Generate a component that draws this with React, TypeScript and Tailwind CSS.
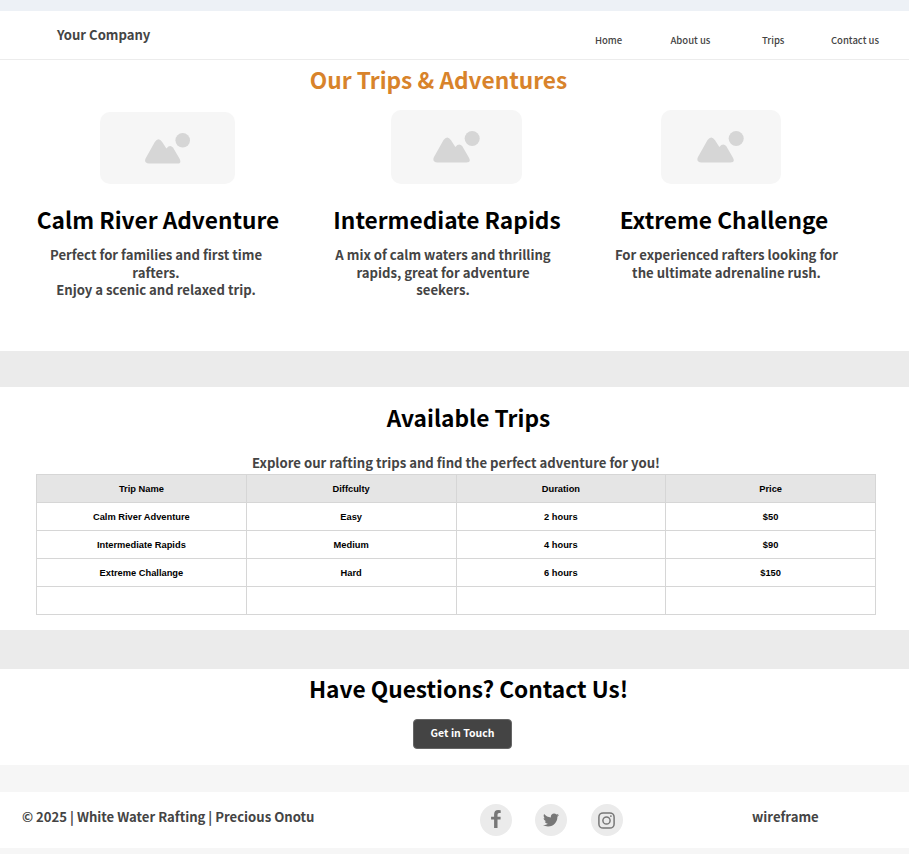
import { FaTwitter } from "react-icons/fa";

const trips = [
  ["Calm River Adventure", "Easy", "2 hours", "$50"],
  ["Intermediate Rapids", "Medium", "4 hours", "$90"],
  ["Extreme Challange", "Hard", "6 hours", "$150"],
  ["", "", "", ""],
];

function Placeholder({ className, icon }: { className: string; icon: string }) {
  return (
    <div className={`flex rounded-[10px] bg-[#f6f6f6] ${className}`}>
      <svg viewBox="0 0 45 31" className={icon} fill="#d6d6d6">
        <circle cx="37.7" cy="7.3" r="7.3" />
        <path d="M.7 25.2 9.8 9Q13.5 3.6 17.2 9L21.4 15.4Q25 11 28 14.6L34.6 25.8Q37 30.6 32 30.6H4Q-1.5 30 .7 25.2Z" />
      </svg>
    </div>
  );
}

function FacebookIcon() {
  return (
    <svg viewBox="0 0 10 18" className="mb-0.5 h-[18px] w-[10px]" fill="currentColor">
      <path d="M9.7.2V3.1H8.1Q6.5 3.1 6.5 4.7V6.7H9.6V9.5H6.5V17.9H3.1V9.5H.1V6.7H3.1V4.3Q3.1 0 7.3 0Q8.9 0 9.7.2Z" />
    </svg>
  );
}

function InstagramIcon() {
  return (
    <svg viewBox="0 0 17 17" className="size-[17px]" fill="none" stroke="currentColor" strokeWidth="1.5">
      <rect x=".9" y=".9" width="15.2" height="15.2" rx="4.2" />
      <circle cx="8.5" cy="8.5" r="3.6" />
      <circle cx="12.9" cy="4.1" r=".9" fill="currentColor" stroke="none" />
    </svg>
  );
}

export default function App() {
  return (
    <div className="h-[861px] w-[909px] overflow-hidden bg-white font-['Noto_Sans_CJK_SC',sans-serif] font-bold whitespace-nowrap text-[#444]">
      <div className="h-[11px] bg-[#edf1f6]" />
      <header className="flex h-[49px] justify-between border-b border-[#ececec] pl-[57px] pr-[29px]">
        <div className="pt-[14px] text-[13.1px] leading-5">Your Company</div>
        <nav className="flex pt-[19px] text-[9.5px] leading-5 font-medium">
          <a className="w-[75.5px]">Home</a>
          <a className="w-[91.5px]">About us</a>
          <a className="w-[69px]">Trips</a>
          <a className="mr-px">Contact us</a>
        </nav>
      </header>

      <section className="h-[291px]">
        <h1 className="w-[877px] pt-1 text-center text-[22.7px] leading-8 text-[#d8832b]">Our Trips &amp; Adventures</h1>
        <div className="flex pt-[14px]">
          <article className="flex w-[316px] flex-col items-center">
            <Placeholder className="ml-[19px] mt-0.5 h-[72px] w-[135px]" icon="ml-[45px] mt-[21px] h-[31px] w-[45px]" />
            <h2 className="pt-5 text-[22.7px] leading-8 text-black">Calm River Adventure</h2>
            <p className="mr-1 pt-[10px] text-center text-[13.15px] leading-[17.5px]">Perfect for families and first time<br />rafters.<br />Enjoy a scenic and relaxed trip.</p>
          </article>
          <article className="flex w-[262px] flex-col items-center">
            <Placeholder className="ml-[19px] h-[74px] w-[131px]" icon="ml-[42px] mt-[21px] h-[32px] w-[47px]" />
            <h2 className="pt-5 text-[22.7px] leading-8 text-black">Intermediate Rapids</h2>
            <p className="mr-2 pt-[10px] text-center text-[13.15px] leading-[17.5px]">A mix of calm waters and thrilling<br />rapids, great for adventure<br />seekers.</p>
          </article>
          <article className="flex w-[292px] flex-col items-center">
            <Placeholder className="mr-[7px] h-[74px] w-[120px]" icon="ml-[36px] mt-[21px] h-[32px] w-[47px]" />
            <h2 className="pt-5 text-[22.7px] leading-8 text-black">Extreme Challenge</h2>
            <p className="ml-[5px] pt-[10px] text-center text-[13.15px] leading-[17.5px]">For experienced rafters looking for<br />the ultimate adrenaline rush.</p>
          </article>
        </div>
      </section>

      <div className="h-9 bg-[#ebebeb]" />

      <section className="h-[243px]">
        <h2 className="w-[937px] pt-[15px] text-center text-[22.7px] leading-8 text-black">Available Trips</h2>
        <p className="w-[912px] pt-[19px] pb-px text-center text-[13.15px] leading-5">Explore our rafting trips and find the perfect adventure for you!</p>
        <table className="ml-9 w-[840px] table-fixed border-collapse text-center font-['Liberation_Sans',sans-serif] text-[9.3px] text-black">
          <thead>
            <tr className="h-7 bg-[#e5e5e5]">
              {["Trip Name", "Diffculty", "Duration", "Price"].map((h) => (
                <th key={h} className="border border-[#d6d6d6] p-0 pt-0.5">{h}</th>
              ))}
            </tr>
          </thead>
          <tbody>
            {trips.map((row, i) => (
              <tr key={i} className="h-7">
                {row.map((c, j) => (
                  <td key={j} className="border border-[#d6d6d6] p-0 pt-0.5">{c}</td>
                ))}
              </tr>
            ))}
          </tbody>
        </table>
      </section>

      <div className="h-[39px] bg-[#ebebeb]" />

      <section className="h-24">
        <h2 className="w-[937px] pt-1 text-center text-[22.7px] leading-8 text-black">Have Questions? Contact Us!</h2>
        <button className="ml-[413px] mt-[14px] block h-[30px] w-[99px] rounded-[4px] border border-[#666] bg-[#444] pb-[2px] text-[10.5px] leading-5 text-white">Get in Touch</button>
      </section>

      <div className="h-[27px] bg-[#f6f6f6]" />

      <footer className="flex h-14 pl-[22px]">
        <div className="w-[458px] pt-[15px] text-[13.13px] leading-5">© 2025 | White Water Rafting | Precious Onotu</div>
        <div className="flex w-[272px] gap-[23.3px] pt-3 text-[#777]">
          <span className="flex size-8 items-center justify-center rounded-full bg-[#ebebeb]"><FacebookIcon /></span>
          <span className="flex size-8 items-center justify-center rounded-full bg-[#ebebeb]"><FaTwitter size={16} /></span>
          <span className="flex size-8 items-center justify-center rounded-full bg-[#ebebeb]"><InstagramIcon /></span>
        </div>
        <div className="pt-[15px] text-[13.15px] leading-5">wireframe</div>
      </footer>
      <div className="h-1.5 bg-[#f6f6f6]" />
    </div>
  );
}
